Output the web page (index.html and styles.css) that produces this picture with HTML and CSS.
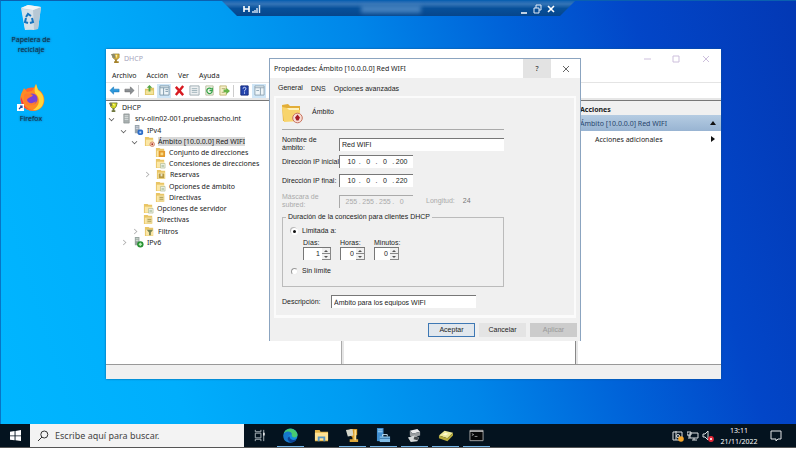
FILE: index.html
```html
<!DOCTYPE html>
<html lang="es">
<head>
<meta charset="utf-8">
<title>DHCP</title>
<link rel="stylesheet" href="styles.css">
</head>
<body>
<svg class="sprites" aria-hidden="true">
  <symbol id="trophy" viewBox="0 0 12 12"><path d="M3 1h7v4L8 7H5L3 5z" fill="#d9b23c" stroke="#7a6a20" stroke-width=".6"/><path d="M5.5 7h2v2h2v2h-5V9h1z" fill="#a5822a"/><path d="M1 1h4l1 5-3-1z" fill="#8a8a70"/><path d="M6 2l2 0-1 4z" fill="#fff3a0"/></symbol>
  <symbol id="cup" viewBox="0 0 12 12"><path d="M2 1h8l-1 4-2 2H5L3 5z" fill="#d8dc20" stroke="#5c6420" stroke-width=".8"/><path d="M5 7h2v2h1v2H4V9h1z" fill="#707840"/><path d="M1 1h3l1 4-2-1z" fill="#77785c"/><path d="M5 2h2v3z" fill="#ffffa8"/></symbol>
  <symbol id="server" viewBox="0 0 12 12"><path d="M3 1h6v10H3z" fill="#a9b0b0" stroke="#7c8585" stroke-width=".6"/><path d="M4 3h4M4 5h4M4 7h4" stroke="#e6eaea" stroke-width=".8"/></symbol>
  <symbol id="ipv4" viewBox="0 0 12 12"><path d="M2 0h5v9H2z" fill="#98a4ac"/><path d="M3 2h3M3 4h3" stroke="#eef" stroke-width=".8"/><rect x="5" y="5" width="6" height="6" rx="2" fill="#2c6cc8"/><path d="M7 7h2v2H7z" fill="#b8d8ff"/></symbol>
  <symbol id="ipv6" viewBox="0 0 12 12"><path d="M2 0h5v9H2z" fill="#98a4a0"/><path d="M3 2h3M3 4h3" stroke="#efe" stroke-width=".8"/><circle cx="8" cy="8" r="3.5" fill="#279032"/><path d="M8 6l2 2-2 2-2-2z" fill="#baf0b8"/></symbol>
  <symbol id="folder" viewBox="0 0 12 12"><path d="M1 1h4l1 1h4v9H1z" fill="#e9c565"/><path d="M2 4h8v6.500H2z" fill="#fbe7a6"/></symbol>
  <symbol id="scope" viewBox="0 0 12 12"><use href="#folder"/><circle cx="9" cy="9" r="2.500" fill="#f7d6bd" stroke="#c96648" stroke-width=".7"/><circle cx="9" cy="9" r="1" fill="#a8302a"/></symbol>
  <symbol id="pool" viewBox="0 0 12 12"><use href="#folder"/><rect x="4" y="4" width="7" height="7" rx="1" fill="#e39a2c"/><path d="M6 6h3v3H6z" fill="#f8d880"/></symbol>
  <symbol id="lease" viewBox="0 0 12 12"><use href="#folder"/><path d="M6 6h5v5H6z" fill="#f5f6ee" stroke="#a2b084" stroke-width=".6"/><path d="M7 8h3M7 9.500h3" stroke="#7b9b6b" stroke-width=".6"/></symbol>
  <symbol id="reserve" viewBox="0 0 12 12"><use href="#folder"/><path d="M3 5h6v5H3z" fill="#b79840"/><path d="M5 5h2v3H5z" fill="#e8e2c2"/></symbol>
  <symbol id="policy" viewBox="0 0 12 12"><use href="#folder"/><path d="M4 4h6v6H4z" fill="#e8d697"/><path d="M5 6h4M5 8h4" stroke="#a69444" stroke-width=".8"/></symbol>
  <symbol id="filter" viewBox="0 0 12 12"><use href="#folder"/><path d="M3 4h7L7.500 7v3h-2V7z" fill="#7b8755"/></symbol>
</svg>
<div class="screen">
  <main class="desktop">
    <div class="shortcuts">
      <a href="#" class="shortcut">
        <svg viewBox="0 0 28 28"><path d="M4 4l7-3 13 2-3 22-13 1z" fill="#dbe5ec"/><path d="M4 4l12 2 8-3-3 22-4 1z" fill="#b6c7d4"/><path d="M4 4l7-3 13 2-8 3z" fill="#f1f5f7"/><path d="M5 5l11 1 1 20-9-1z" fill="#d5e1e9"/><g fill="none" stroke="#1673bf" stroke-width="2"><path d="M9 13l2-3 3 2M15 14l1 4-3 1M11 19l-3-1 1-4"/></g></svg>
        <span>Papelera de<br>reciclaje</span>
      </a>
      <a href="#" class="shortcut">
        <svg viewBox="0 0 28 28"><circle cx="15" cy="16" r="11.500" fill="#ff6432"/><path d="M4 18C2 12 6 8 7 5l3 4 5-1 4-7 2 6c7 3 8 12 4 17-5 6-18 6-21-6z" fill="#ff8a24"/><path d="M19 1l2 6c6 4 7 11 4 16-2 3-6 5-9 4 7-4 8-12 2-17-1-3 0-6 1-9z" fill="#ffd43a"/><path d="M4 14c-1 9 6 14 14 13-4 1-11-2-12-8z" fill="#f0344c"/><circle cx="15" cy="16" r="5.500" fill="#7941d8"/><path d="M7 12c3-3 6-1 9 0-2 3-5 2-6 5 1 4 6 4 9 1-1 6-10 6-12 0z" fill="#ff7c2c"/><path d="M0 21h7v7H0z" fill="#fff"/><path d="M2 26l3-3M3 23h2v2" stroke="#1a54a8" stroke-width="1.200" fill="none"/></svg>
        <span>Firefox</span>
      </a>
    </div>

    <header class="session">
      <svg class="pin" viewBox="0 0 18 8"><path d="M1 1v6M6 1v6M1 4h5" stroke="#fff" stroke-width="1.600"/><path d="M10 8V6M12 8V5M14 8V3M16.500 8V0" stroke="#dce9f8" stroke-width="1.400"/></svg>
      <span class="session-name"></span>
      <svg class="session-controls" viewBox="0 0 36 10"><path d="M1 9h6" stroke="#fff" stroke-width="1.500"/><path d="M14 4h5v5h-5zM16 4V1h5v5h-2" stroke="#e3ecf8" fill="none"/><path d="M28 2l6 6M34 2l-6 6" stroke="#fff" stroke-width="1.600"/></svg>
    </header>

    <section class="console" aria-label="DHCP">
      <header class="console-title">
        <svg class="icon"><use href="#trophy"/></svg><span>DHCP</span>
        <svg class="window-controls" viewBox="0 0 68 10"><g fill="none" stroke="#cdbfdc"><path d="M1 5h7M30 2h6v6h-6zM60 2l6 6M66 2l-6 6"/></g></svg>
      </header>
      <nav class="menu"><a href="#">Archivo</a><a href="#">Acción</a><a href="#">Ver</a><a href="#">Ayuda</a></nav>
      <div class="toolbar">
        <button aria-label="Atrás"><svg viewBox="0 0 12 12"><path d="M1 6l4-4v2.500h6v3H5V10z" fill="#2b98dc" stroke="#1673b5" stroke-width=".6"/></svg></button>
        <button aria-label="Adelante"><svg viewBox="0 0 12 12"><path d="M11 6L7 2v2.500H1v3h6V10z" fill="#8b9094" stroke="#666" stroke-width=".6"/></svg></button>
        <i></i>
        <button aria-label="Subir"><svg viewBox="0 0 12 12"><path d="M1 4h4l1-1h5v8H1z" fill="#dfc566"/><path d="M2 6h8v4H2z" fill="#f2e49c"/><path d="M5 7V3H3l3-3 3 3H7v4z" fill="#55a342"/></svg></button>
        <button class="on" aria-label="Árbol"><svg viewBox="0 0 12 12"><path d="M1 1h10v10H1z" fill="#eef5f8" stroke="#7d98ab"/><path d="M1 3h10M5 3v8M7 5h3M7 7h3" stroke="#7d98ab"/></svg></button>
        <button aria-label="Eliminar"><svg viewBox="0 0 12 12"><path d="M2 2l8 9M10 1L2 11" stroke="#d71920" stroke-width="2.600"/></svg></button>
        <button aria-label="Propiedades"><svg viewBox="0 0 12 12"><path d="M1 1h10v10H1z" fill="#eef1f2" stroke="#9caab0"/><path d="M3 4h6M3 6h6M3 8h6" stroke="#9cb0b8"/></svg></button>
        <button aria-label="Actualizar"><svg viewBox="0 0 12 12"><path d="M2 1h8v10H2z" fill="#f4f5e9" stroke="#b7bc9b"/><path d="M8 4a3 3 0 10 1 3M9 3v3H6" fill="none" stroke="#35a349" stroke-width="1.400"/></svg></button>
        <button aria-label="Exportar"><svg viewBox="0 0 12 12"><path d="M1 1h7v10H1z" fill="#f5f0c8" stroke="#c1b674"/><path d="M3 4h4M3 8h3" stroke="#b0aa70"/><path d="M5 5h3V3l4 3.500L8 10V8H5z" fill="#68b548"/></svg></button>
        <i></i>
        <button aria-label="Ayuda"><svg viewBox="0 0 12 12"><path d="M2 1h8v10H2z" fill="#2545ae" stroke="#142a7c"/><path d="M4.500 4c0-2 3-2 3 0 0 1.500-1.500 1-1.500 3M6 8v1.500" stroke="#e4ebff" fill="none"/></svg></button>
        <button class="on" aria-label="Panel de acciones"><svg viewBox="0 0 12 12"><path d="M1 1h10v10H1z" fill="#eef5f8" stroke="#8ea3b2"/><path d="M1 3h10M7 3v8M2.500 6h3" stroke="#8ea3b2"/></svg></button>
      </div>
      <div class="panes">
        <div class="tree-pane">
          <ul class="tree">
            <li class="l0"><svg class="icon"><use href="#cup"/></svg><span>DHCP</span></li>
            <li class="l1 open"><svg class="icon"><use href="#server"/></svg><span>srv-olin02-001.pruebasnacho.int</span></li>
            <li class="l2 open"><svg class="icon"><use href="#ipv4"/></svg><span>IPv4</span></li>
            <li class="l3 open"><svg class="icon"><use href="#scope"/></svg><span class="selected">Ámbito [10.0.0.0] Red WIFI</span></li>
            <li class="l4"><svg class="icon"><use href="#pool"/></svg><span>Conjunto de direcciones</span></li>
            <li class="l4"><svg class="icon"><use href="#lease"/></svg><span>Concesiones de direcciones</span></li>
            <li class="l4 closed"><svg class="icon"><use href="#reserve"/></svg><span>Reservas</span></li>
            <li class="l4"><svg class="icon"><use href="#lease"/></svg><span>Opciones de ámbito</span></li>
            <li class="l4"><svg class="icon"><use href="#policy"/></svg><span>Directivas</span></li>
            <li class="l3"><svg class="icon"><use href="#lease"/></svg><span>Opciones de servidor</span></li>
            <li class="l3"><svg class="icon"><use href="#policy"/></svg><span>Directivas</span></li>
            <li class="l3 closed"><svg class="icon"><use href="#filter"/></svg><span>Filtros</span></li>
            <li class="l2 closed"><svg class="icon"><use href="#ipv6"/></svg><span>IPv6</span></li>
          </ul>
        </div>
        <div class="results"></div>
        <aside class="actions">
          <h2>Acciones</h2>
          <h3>Ámbito [10.0.0.0] Red WIFI<svg viewBox="0 0 6 6"><path d="M0 5l3-4 3 4z"/></svg></h3>
          <a href="#">Acciones adicionales<svg viewBox="0 0 6 6"><path d="M1 0l4 3-4 3z"/></svg></a>
        </aside>
      </div>
      <footer class="status"></footer>
    </section>

    <form class="dialog" role="dialog" aria-labelledby="dialog-title">
      <header class="dialog-title">
        <span id="dialog-title">Propiedades: Ámbito [10.0.0.0] Red WIFI</span>
        <button type="button" class="help">?</button>
        <button type="button" class="close" aria-label="Cerrar"><svg viewBox="0 0 8 8"><path d="M1 1l6 6M7 1L1 7" stroke="#666" fill="none"/></svg></button>
      </header>
      <nav class="tabs"><a href="#" class="current">General</a><a href="#">DNS</a><a href="#">Opciones avanzadas</a></nav>
      <div class="sheet">
        <div class="heading">
          <svg viewBox="0 0 21 21"><path d="M0 2l6-1 2 2h10v15H1z" fill="#e3ae38"/><path d="M2 5h15v12H2z" fill="#fff2bd"/><path d="M0 4l5 1 2 2h11v11l-16 1z" fill="#f8d46c"/><circle cx="15.500" cy="15" r="4.800" fill="#f8ded5" stroke="#c8745f"/><path d="M15.500 11.500l2.500 3-1.500 3h-2l-1.500-3z" fill="#a51f28"/></svg>
          <span>Ámbito</span>
        </div>
        <div class="field name"><label for="name">Nombre de ámbito:</label><input id="name" class="box" value="Red WIFI"></div>
        <div class="field"><label for="start">Dirección IP inicial:</label><div class="box ip"><input id="start" value="10"><b>.</b><input aria-label="Octeto 2" value="0"><b>.</b><input aria-label="Octeto 3" value="0"><b>.</b><input aria-label="Octeto 4" value="200"></div></div>
        <div class="field"><label for="end">Dirección IP final:</label><div class="box ip"><input id="end" value="10"><b>.</b><input aria-label="Octeto 2" value="0"><b>.</b><input aria-label="Octeto 3" value="0"><b>.</b><input aria-label="Octeto 4" value="220"></div></div>
        <div class="field off"><label for="mask">Máscara de subred:</label><div class="box ip"><input id="mask" value="255" disabled><b>.</b><input aria-label="Octeto 2" value="255" disabled><b>.</b><input aria-label="Octeto 3" value="255" disabled><b>.</b><input aria-label="Octeto 4" value="0" disabled></div><span class="length">Longitud: <output>24</output></span></div>
        <fieldset>
          <legend>Duración de la concesión para clientes DHCP</legend>
          <label class="choice"><input type="radio" name="limit" checked>Limitada a:</label>
          <div class="spins">
            <label>Días:<span class="box spin wide"><input value="1"><span class="steps"><button type="button" aria-label="Más"></button><button type="button" aria-label="Menos"></button></span></span></label>
            <label>Horas:<span class="box spin"><input value="0"><span class="steps"><button type="button" aria-label="Más"></button><button type="button" aria-label="Menos"></button></span></span></label>
            <label>Minutos:<span class="box spin"><input value="0"><span class="steps"><button type="button" aria-label="Más"></button><button type="button" aria-label="Menos"></button></span></span></label>
          </div>
          <label class="choice"><input type="radio" name="limit">Sin límite</label>
        </fieldset>
        <div class="description"><label for="desc">Descripción:</label><input id="desc" class="box" value="Ámbito para los equipos WIFI"></div>
      </div>
      <div class="buttons"><button type="button" class="default">Aceptar</button><button type="button">Cancelar</button><button type="button" disabled>Aplicar</button></div>
    </form>
  </main>

  <footer class="taskbar">
    <button class="start" aria-label="Inicio"><svg viewBox="0 0 12 12"><path d="M0 2l5-1v5H0zM6 1l6-1v6H6zM0 6.800h5v4.500l-5-.8zM6 6.800h6V12l-6-.8z" fill="#fff"/></svg></button>
    <label class="search"><svg viewBox="0 0 12 12"><circle cx="7.300" cy="4.500" r="3.500" fill="none" stroke="#333"/><path d="M5 7l-4 4" stroke="#333"/></svg><input placeholder="Escribe aquí para buscar." aria-label="Buscar"></label>
    <div class="apps">
      <button aria-label="Vista de tareas"><svg viewBox="0 0 16 16"><g fill="none" stroke="#aeb8bd"><path d="M3.500 5.500h6v5h-6zM3.500 2v2h6V2M3.500 14v-2h6v2M12.500 2v12"/></g><path d="M12 5h1.500v3H12z" fill="#fff"/></svg></button>
      <button class="running" aria-label="Edge"><svg viewBox="0 0 16 16"><circle cx="8" cy="8" r="7.500" fill="#148cdc"/><path d="M1 6C2-1 14-1 15.500 7c0 4-6 4-6 1C9 5 4 3 1 6z" fill="#46ca72"/><path d="M1 6c3-4 9-2 8.500 1-5-1-5 5 1 8C3 17-1 12 1 6z" fill="#1677ca"/><path d="M7 9c0 3 4 5 7 3-2 5-8 4-9 0 0-2 1-3 2-3z" fill="#0b4295"/></svg></button>
      <button aria-label="Explorador"><svg viewBox="0 0 16 16"><path d="M1 2h5l1 2h8v10H1z" fill="#e4b447"/><path d="M1 5h14v8H1z" fill="#ffe294"/><path d="M4 14V9h8v5h-2v-3H6v3z" fill="#5997c4"/></svg></button>
      <button class="running" aria-label="DHCP"><svg viewBox="0 0 16 16"><path d="M5 1h8v6l-3 3H8L5 7z" fill="#d89924"/><path d="M8 9h3v3h3v3H5v-3h3z" fill="#dda637"/><path d="M1 2l7-1 1 7-6 1z" fill="#d4d7cb"/><path d="M10 2h2v11h-2z" fill="#fbdf8f"/></svg></button>
      <button class="running" aria-label="Administrador"><svg viewBox="0 0 16 16"><path d="M1 0h7v14H1z" fill="#3f8ed0"/><path d="M2 2h5M2 4h5" stroke="#a9dafa"/><path d="M4 9h11v6H4z" fill="#80bce5"/><path d="M7 9V7h5v2" fill="none" stroke="#c7e5f6"/><path d="M4 11h11" stroke="#3274a9"/></svg></button>
      <button class="running" aria-label="Servidor"><svg viewBox="0 0 16 16"><path d="M3 3l8-2 3 3-8 2z" fill="#eee"/><path d="M3 3l3 3v4L3 8zM6 6l8-2v4l-8 2z" fill="#999d9f"/><path d="M1 10l7-2 5 2-2 4-7 1z" fill="#d5d8d8"/><path d="M8 9l5 1-2 3-4-1z" fill="#44494b"/></svg></button>
      <button class="running" aria-label="Disco"><svg viewBox="0 0 16 16"><path d="M1 8l6-5 9 2-6 6z" fill="#eee99a"/><path d="M1 8l9 3v3l-9-3zM10 11l6-6v3l-6 6z" fill="#b7aa3b"/><path d="M5 7l3-2 3 1-3 2z" fill="#fffbd0"/></svg></button>
      <button class="running" aria-label="Símbolo del sistema"><svg viewBox="0 0 16 16"><path d="M1 2.500h14v11H1z" fill="#080808" stroke="#a5a5a5"/><path d="M1 3.500h14" stroke="#ddd"/><path d="M3 6l2 1-2 1M6 9h3" stroke="#bbb" fill="none" stroke-width=".8"/></svg></button>
    </div>
    <div class="tray">
      <svg viewBox="0 0 12 12"><path d="M1 2h9v8H1zM4 1v9" fill="none" stroke="#d9dee0"/><circle cx="6" cy="6" r="1.500" fill="none" stroke="#d9dee0"/><circle cx="9" cy="9" r="2.800" fill="#f4a62c"/></svg>
      <svg viewBox="0 0 12 12"><path d="M3 3h8v5H3zM0 2h4v3H0zM2 5v4M5 10h5M7 8v2" fill="none" stroke="#d9dee0"/></svg>
      <svg viewBox="0 0 12 12"><path d="M1 4h2l3-3v9L3 7H1z" fill="none" stroke="#d9dee0"/><circle cx="9" cy="9" r="2.900" fill="#e32636"/><path d="M8 8l2 2M10 8l-2 2" stroke="#fff" stroke-width=".8"/></svg>
      <time datetime="2022-11-21T13:11">13:11<br>21/11/2022</time>
      <svg class="notices" viewBox="0 0 12 12"><path d="M1 1h10v8H8l-2 2V9H1z" fill="none" stroke="#e3e6e8"/></svg>
    </div>
  </footer>
</div>
</body>
</html>
```
FILE: styles.css
```css
:root {
  --shell: "Noto Sans", "Open Sans", sans-serif;
  --classic: "Liberation Sans", Arial, sans-serif;
}
* { box-sizing: border-box; }
body { margin: 0; font: 7px/9px var(--shell); color: #222; background: #fff; }
a { color: inherit; text-decoration: none; }
ul, h2, h3 { margin: 0; padding: 0; list-style: none; font: inherit; }
button, input { margin: 0; padding: 0; border: 0; font: inherit; color: inherit; background: none; }
input { min-width: 0; outline: 0; }
svg { display: block; flex: none; }
.sprites { display: none; }
.icon { width: 11px; height: 11px; }

.screen { display: flex; flex-direction: column; height: 100vh; padding: 0 4px 4px 0; }
.desktop {
  position: relative;
  flex: 1;
  border-top: 1px solid #0a60b0;
  border-left: 1px solid #0875c5;
  background: linear-gradient(72deg, #00b6ff 0%, #00aefc 20%, #009cf2 38%, #0086e9 52%, #0062d8 68%, #0246c8 82%, #0338b4 100%);
}

.shortcuts { display: grid; gap: 24px; width: 60px; padding-top: 3px; }
.shortcut { display: grid; justify-items: center; align-content: start; gap: 3px; height: 55px; text-align: center; line-height: 10px; color: #12334c; text-shadow: 0 0 2px #17415f; }
.shortcut svg { width: 28px; height: 28px; }

.session {
  position: absolute; top: 0; left: 221px; right: 221px;
  display: flex; align-items: center; justify-content: space-between;
  height: 15px; padding: 0 19px 0 21px;
  background: linear-gradient(#1765b4, #3474b6 20%, #07509a 50%, #06458b);
  clip-path: polygon(0 0, 100% 0, calc(100% - 15px) 100%, 15px 100%);
}
.pin { width: 18px; height: 8px; }
.session-name { width: 60px; height: 8px; background: #4480bd; filter: blur(2px); }
.session-controls { width: 36px; height: 10px; }

.console {
  position: absolute; left: 105px; right: 75px; top: 48px; bottom: 45px;
  display: flex; flex-direction: column;
  background: #fff;
  box-shadow: 0 0 2px #0d5590;
}
.console-title { display: flex; align-items: center; gap: 3px; height: 19px; padding: 0 10px 0 4px; color: #a7a5bc; }
.window-controls { width: 68px; height: 10px; margin-left: auto; }
.menu { display: flex; align-items: center; gap: 10px; height: 14px; padding-left: 6px; }
.toolbar { display: flex; align-items: center; height: 16px; padding-left: 1px; border-top: 1px solid #e4e4e4; }
.toolbar button { display: grid; place-items: center; width: 14px; height: 14px; margin-right: 1px; }
.toolbar .on { background: #cfe6f7; }
.toolbar svg { width: 11px; height: 11px; }
.toolbar i { width: 1px; height: 12px; margin: 0 3px 0 1px; background: #ccc; }
.panes {
  flex: 1; display: grid; grid-template-columns: 236px 1fr 143px; gap: 2px;
  padding-top: 2px; border-bottom: 1px solid #999; background: #e6e6e6;
}
.panes > * { border-top: 1px solid #777; background: #fff; }
.tree-pane { border-right: 1px solid #aaa; }
.tree { display: grid; grid-auto-rows: 1fr; height: 147px; padding-top: 1px; }
.tree li { display: flex; align-items: center; gap: 3px; white-space: nowrap; }
.tree li::before { content: ""; width: 4px; height: 4px; margin: 0 4px 0 3px; }
.tree .l0::before { display: none; }
.tree .l0 { padding-left: 2px; }
.tree .open::before { border: solid #555; border-width: 0 1px 1px 0; rotate: 45deg; scale: .8; }
.tree .closed::before { border: solid #aaa; border-width: 1px 1px 0 0; rotate: 45deg; scale: .8; }
.l2 { padding-left: 12px; }
.l3 { padding-left: 23px; }
.l4 { padding-left: 35px; }
.selected { background: #d8d8d8; }
.results { border-right: 1px solid #888; }
.actions h2 { height: 14px; padding: 4px 0 0 2px; font-weight: 700; background: #f0f0f0; }
.actions h3, .actions a { display: flex; align-items: center; justify-content: space-between; height: 16px; padding: 0 5px 0 2px; }
.actions h3 { color: #28466c; background: linear-gradient(#b5cce2, #98b4d2); }
.actions a { padding-left: 17px; }
.actions svg { width: 6px; height: 6px; fill: #111; }
.status { height: 14px; background: #f0f0f0; }

.dialog {
  position: absolute; left: 268px; top: 57px; width: 312px;
  border: 1px solid #8ba4c0; border-bottom: 0;
  font: 7px/8px var(--classic);
  background: #f0f0f0;
}
.dialog-title { display: flex; align-items: stretch; height: 19px; padding-left: 4px; line-height: 19px; font-family: var(--shell); background: #fff; }
.dialog-title span { flex: 1; }
.help { width: 28px; background: #e3e3e3; }
.close { display: grid; place-items: center; width: 29px; }
.close svg { width: 8px; height: 8px; }
.tabs { display: flex; gap: 8px; align-items: center; height: 18px; padding: 3px 0 0 8px; }
.tabs .current { padding-bottom: 2px; }
.sheet { margin: 0 4px; padding: 5px 0 0 6px; height: 222px; border: 2px solid #fbfbfb; border-bottom-width: 3px; }
.heading { display: flex; gap: 9px; width: 222px; height: 27px; border-bottom: 1px solid #aaa; line-height: 18px; }
.heading svg { width: 21px; height: 21px; }
.box { display: block; height: 13px; padding-left: 2px; border: solid #777; border-width: 1px 0 0 1px; background: #fff; }
.field { display: grid; grid-template-columns: 57px 74px 1fr; align-items: center; width: 222px; height: 13px; margin-top: 6px; white-space: nowrap; }
.field.name { grid-template-columns: 57px 1fr; }
.name label, .off label { width: 40px; white-space: normal; }
.ip { display: flex; align-items: center; padding: 0 4px; }
.ip input { flex: 1; width: 0; text-align: center; }
.ip b { font-weight: 400; }
.off { color: #aaa; }
.off .box { background: #f0f0f0; border-color: #aaa; }
.length { padding-left: 13px; }
.length output { margin-left: 6px; color: #777; }
fieldset { width: 222px; height: 74px; margin: 7px 0 0; padding: 4px 8px; border: 1px solid #bbb; }
legend { margin-left: -5px; padding: 0 2px; }
.choice { display: flex; align-items: center; gap: 4px; height: 12px; }
.choice input { appearance: none; width: 7px; height: 7px; border: 1px solid #999; border-right-color: #eee; border-bottom-color: #eee; border-radius: 50%; background: #fff; }
.choice input:checked { border: 2px solid #fff; background: #111; box-shadow: -1px -1px 0 #bbb; }
.spins { display: flex; gap: 9px; padding: 2px 0 5px 12px; }
.spin { display: flex; width: 25px; }
.spin.wide { width: 28px; }
.spin input { flex: 1; width: 0; padding-right: 2px; text-align: right; }
.steps { display: grid; width: 9px; grid-template-rows: 1fr 1fr; }
.steps button { display: grid; place-items: center; background: #f0f0f0; border: solid #888; border-width: 0 1px 1px 0; }
.steps button::before { content: ""; border: solid transparent; border-width: 0 2px 2px; border-bottom-color: #555; }
.steps button:last-child::before { rotate: 180deg; }
.description { display: grid; grid-template-columns: 49px 145px; align-items: center; margin-top: 8px; }
.buttons { display: flex; justify-content: flex-end; gap: 4px; padding: 5px 3px 4px; }
.buttons button { width: 47px; height: 14px; background: #e4e4e4; }
.buttons .default { border: 1px solid #3e78b4; background: #e1e7ed; }
.buttons button:disabled { color: #999; background: #ccc; }

.taskbar { display: flex; height: 24px; color: #fff; background: #04131f; border-bottom: 1px solid #555; }
.start { display: grid; place-items: center; width: 30px; }
.start svg { width: 11px; height: 11px; }
.search { display: flex; align-items: center; gap: 6px; width: 214px; padding-left: 7px; color: #444; background: #f3f3f3; }
.search svg { width: 12px; height: 12px; }
.search input { flex: 1; font-size: 9px; }
.search input::placeholder { color: #444; opacity: 1; }
.apps { display: flex; }
.apps button { display: grid; place-items: center; width: 27px; margin: 0 2px; border-bottom: 1px solid transparent; }
.apps .running { border-color: #76b9ed; }
.apps svg { width: 15px; height: 15px; }
.tray { display: flex; align-items: center; gap: 3px; margin-left: auto; padding-right: 14px; }
.tray svg { width: 12px; height: 12px; }
.tray time { width: 44px; text-align: center; line-height: 11px; }
.tray .notices { margin-left: 6px; }
```
